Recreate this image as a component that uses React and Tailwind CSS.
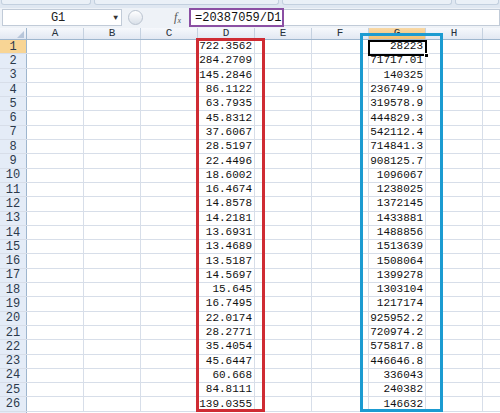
const D = ['722.3562', '284.2709', '145.2846', '86.1122', '63.7935', '45.8312', '37.6067', '28.5197', '22.4496', '18.6002', '16.4674', '14.8578', '14.2181', '13.6931', '13.4689', '13.5187', '14.5697', '15.645', '16.7495', '22.0174', '28.2771', '35.4054', '45.6447', '60.668', '84.8111', '139.0355']
const G = ['28223', '71717.01', '140325', '236749.9', '319578.9', '444829.3', '542112.4', '714841.3', '908125.7', '1096067', '1238025', '1372145', '1433881', '1488856', '1513639', '1508064', '1399278', '1303104', '1217174', '925952.2', '720974.2', '575817.8', '446646.8', '336043', '240382', '146632']
const COLS = ['A', 'B', 'C', 'D', 'E', 'F', 'G', 'H']

const mono = { fontFamily: '"Liberation Mono", "DejaVu Sans Mono", monospace' }

function HeaderRow() {
  return (
    <div className="flex h-[12px] border-b border-[#9eb6ce] bg-gradient-to-b from-[#f6f8fc] to-[#e2e8f2]">
      <div className="relative w-[27px] shrink-0 border-r border-[#9eb6ce]">
        <div className="absolute bottom-[1px] right-[2px] h-0 w-0 border-b-[7px] border-l-[7px] border-b-[#b7c6da] border-l-transparent" />
      </div>
      {COLS.map((c) => (
        <div
          key={c}
          className={`flex w-[57px] shrink-0 items-center justify-center border-r border-[#c5d1e0] text-[11px] leading-none text-[#27313d] ${c === 'G' ? 'bg-gradient-to-b from-[#f9d9a6] to-[#f1bf72]' : ''}`}
        >
          {c}
        </div>
      ))}
      <div className="flex-1" />
    </div>
  )
}

function Row({ n }) {
  return (
    <div className="flex h-[14.3px] border-b border-[#d7dee9]">
      <div className={`flex w-[27px] shrink-0 items-center justify-center border-r border-[#9eb6ce] text-[12px] leading-none text-[#2c3a4c] ${n === 1 ? 'bg-[#f8d595]' : 'bg-[#e4ecf7]'}`}>
        {n}
      </div>
      {COLS.map((c) => (
        <div key={c} className="flex w-[57px] shrink-0 items-center justify-end border-r border-[#d7dee9] pr-[2px] text-[11px] leading-none text-[#111]">
          {c === 'D' ? D[n - 1] : c === 'G' ? G[n - 1] : ''}
        </div>
      ))}
      <div className="flex-1" />
    </div>
  )
}

export default function App() {
  return (
    <div className="relative h-[413px] w-[500px] overflow-hidden bg-white" style={mono}>
      {/* ribbon bottom */}
      <div className="flex h-[8px] gap-[3px] bg-[#dfe7f1] px-[1px]">
        <div className="h-[5px] w-[90px] rounded-b-[3px] border border-t-0 border-[#c3d0df] bg-[#eaf0f7]" />
        <div className="h-[5px] w-[185px] rounded-b-[3px] border border-t-0 border-[#c3d0df] bg-[#eaf0f7]" />
        <div className="h-[5px] w-[170px] rounded-b-[3px] border border-t-0 border-[#c3d0df] bg-[#eaf0f7]" />
        <div className="h-[5px] flex-1 rounded-b-[3px] border border-t-0 border-[#c3d0df] bg-[#eaf0f7]" />
      </div>

      {/* formula bar */}
      <div className="flex h-[20px] items-start bg-[#eef2f7] pt-[1px]">
        <div className="ml-[2px] flex h-[17px] w-[120px] items-center border border-[#c1cbd8] bg-white">
          <span className="flex-1 text-center text-[12px] leading-none text-[#222]">G1</span>
          <span className="mr-[3px] text-[8px] leading-none text-[#333]">▼</span>
        </div>
        <div className="ml-[6px] mt-[1px] h-[15px] w-[15px] rounded-full border border-[#b9c3cf] bg-gradient-to-b from-[#ffffff] to-[#d9e0e9]" />
        <div className="flex-1" />
        <span className="mr-[8px] mt-[2px] text-[12px] italic leading-none text-[#555]" style={{ fontFamily: '"Liberation Serif", serif' }}>
          f<sub className="text-[8px]">x</sub>
        </span>
        <div className="flex h-[17px] w-[311px] items-center border border-[#c1cbd8] bg-white pl-[5px] text-[12px] leading-none text-[#111]">
          =20387059/D1
        </div>
      </div>

      <HeaderRow />
      {Array.from({ length: 26 }, (_, i) => (
        <Row key={i} n={i + 1} />
      ))}
      <div className="flex h-[4px]">
        <div className="w-[27px] shrink-0 border-r border-[#9eb6ce] bg-[#e4ecf7]" />
      </div>

      {/* annotation boxes */}
      <div className="absolute left-[189px] top-[8px] h-[19px] w-[95px] border-2 border-[#8b4fa3]" />
      <div className="absolute left-[196px] top-[38px] h-[374px] w-[69px] border-[3px] border-[#cf2b33]" />
      <div className="absolute left-[360px] top-[33px] h-[379px] w-[83px] border-[3px] border-[#1b9bd1]" />

      {/* selected cell G1 */}
      <div className="absolute left-[368px] top-[40px] h-[16px] w-[59px] border-2 border-black" />
      <div className="absolute left-[424px] top-[53px] h-[5px] w-[5px] border border-white bg-black" />
    </div>
  )
}
